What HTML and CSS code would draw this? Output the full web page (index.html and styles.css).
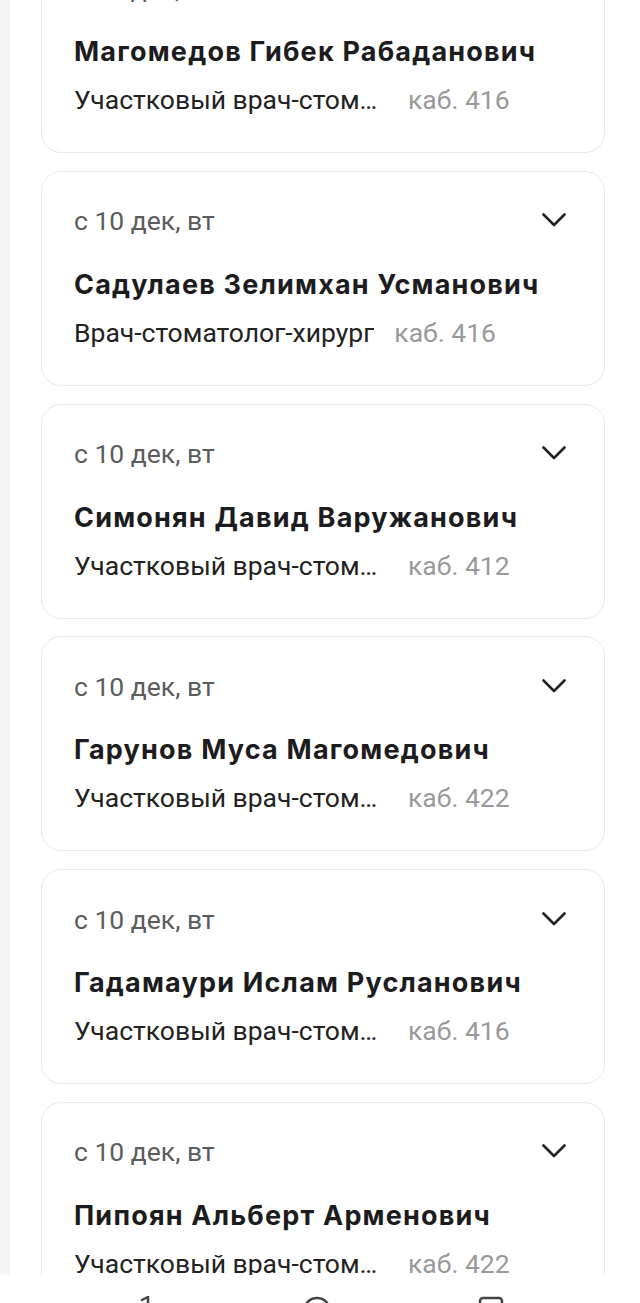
FILE: index.html
```html
<!DOCTYPE html>
<html lang="ru">
<head>
<meta charset="UTF-8">
<meta name="viewport" content="width=device-width, initial-scale=1.0">
<title>Врачи</title>
<link rel="stylesheet" href="styles.css">
</head>
<body>
<div class="screen">
    <div class="list">
        <div class="doctor">
            <div class="doctor-head">
                <span class="doctor-date">с 10 дек, вт</span>
                <svg class="chevron" width="24" height="15" viewBox="0 0 24 15"><polyline points="1.5,1.5 12,12 22.5,1.5"/></svg>
            </div>
            <div class="doctor-name">Магомедов Гибек Рабаданович</div>
            <div class="doctor-info">
                <span class="doctor-spec">Участковый врач-стоматолог</span>
                <span class="doctor-room">каб. 416</span>
            </div>
        </div>
        <div class="doctor">
            <div class="doctor-head">
                <span class="doctor-date">с 10 дек, вт</span>
                <svg class="chevron" width="24" height="15" viewBox="0 0 24 15"><polyline points="1.5,1.5 12,12 22.5,1.5"/></svg>
            </div>
            <div class="doctor-name">Садулаев Зелимхан Усманович</div>
            <div class="doctor-info">
                <span class="doctor-spec">Врач-стоматолог-хирург</span>
                <span class="doctor-room">каб. 416</span>
            </div>
        </div>
        <div class="doctor">
            <div class="doctor-head">
                <span class="doctor-date">с 10 дек, вт</span>
                <svg class="chevron" width="24" height="15" viewBox="0 0 24 15"><polyline points="1.5,1.5 12,12 22.5,1.5"/></svg>
            </div>
            <div class="doctor-name">Симонян Давид Варужанович</div>
            <div class="doctor-info">
                <span class="doctor-spec">Участковый врач-стоматолог</span>
                <span class="doctor-room">каб. 412</span>
            </div>
        </div>
        <div class="doctor">
            <div class="doctor-head">
                <span class="doctor-date">с 10 дек, вт</span>
                <svg class="chevron" width="24" height="15" viewBox="0 0 24 15"><polyline points="1.5,1.5 12,12 22.5,1.5"/></svg>
            </div>
            <div class="doctor-name">Гарунов Муса Магомедович</div>
            <div class="doctor-info">
                <span class="doctor-spec">Участковый врач-стоматолог</span>
                <span class="doctor-room">каб. 422</span>
            </div>
        </div>
        <div class="doctor">
            <div class="doctor-head">
                <span class="doctor-date">с 10 дек, вт</span>
                <svg class="chevron" width="24" height="15" viewBox="0 0 24 15"><polyline points="1.5,1.5 12,12 22.5,1.5"/></svg>
            </div>
            <div class="doctor-name">Гадамаури Ислам Русланович</div>
            <div class="doctor-info">
                <span class="doctor-spec">Участковый врач-стоматолог</span>
                <span class="doctor-room">каб. 416</span>
            </div>
        </div>
        <div class="doctor">
            <div class="doctor-head">
                <span class="doctor-date">с 10 дек, вт</span>
                <svg class="chevron" width="24" height="15" viewBox="0 0 24 15"><polyline points="1.5,1.5 12,12 22.5,1.5"/></svg>
            </div>
            <div class="doctor-name">Пипоян Альберт Арменович</div>
            <div class="doctor-info">
                <span class="doctor-spec">Участковый врач-стоматолог</span>
                <span class="doctor-room">каб. 422</span>
            </div>
        </div>
    </div>
</div>

<nav class="navbar">
    <svg class="nav-icon" width="20" height="30" viewBox="0 0 20 30"><path d="M6 4 L12 1 L12 29"/></svg>
    <svg class="nav-icon" width="30" height="30" viewBox="0 0 30 30"><circle cx="15" cy="15" r="13"/></svg>
    <svg class="nav-icon" width="26" height="30" viewBox="0 0 26 30"><rect x="2" y="2" width="22" height="26" rx="3"/></svg>
</nav>
</body>
</html>
```

FILE: styles.css
```css
body {
    margin: 0;
    padding: 0;
    background-color: #f4f5f7;
    font-family: Roboto, "Noto Sans", sans-serif;
    overflow: hidden;
    height: 1303px;
}
.screen {
    margin-left: 10px;
    background-color: #fff;
    height: 1303px;
    overflow: hidden;
}
.list {
    display: flex;
    flex-direction: column;
    gap: 17.75px;
    margin-top: -62px;
    padding: 0 35px 0 31px;
}
.doctor {
    border: 1px solid #e8e9ec;
    border-radius: 20px;
    padding: 31px 38px 36px 32px;
    background-color: #fff;
}
.doctor-head {
    display: flex;
    align-items: center;
    justify-content: space-between;
    height: 36px;
}
.doctor-date {
    font-size: 26.5px;
    color: #5c5c5c;
}
.chevron {
    fill: none;
    stroke: #222;
    stroke-width: 2.6;
    stroke-linecap: round;
    stroke-linejoin: round;
}
.doctor-name {
    margin-top: 28px;
    line-height: 36px;
    font-family: Inter, "Noto Sans", sans-serif;
    font-weight: 700;
    font-size: 27px;
    letter-spacing: 1.2px;
    color: #1c1c1e;
}
.doctor-info {
    display: flex;
    gap: 20px;
    margin-top: 14px;
    line-height: 32px;
    font-size: 26.5px;
}
.doctor-spec {
    max-width: 314px;
    white-space: nowrap;
    overflow: hidden;
    text-overflow: ellipsis;
    color: #222;
}
.doctor-room {
    color: #999;
    white-space: nowrap;
}
.navbar {
    position: fixed;
    left: 0;
    right: 0;
    top: 1275px;
    height: 60px;
    background-color: #fff;
    display: flex;
    justify-content: center;
    gap: 146px;
    padding-top: 21px;
    box-sizing: border-box;
}
.nav-icon {
    fill: none;
    stroke: #444;
    stroke-width: 2.5;
    stroke-linecap: round;
}
```
